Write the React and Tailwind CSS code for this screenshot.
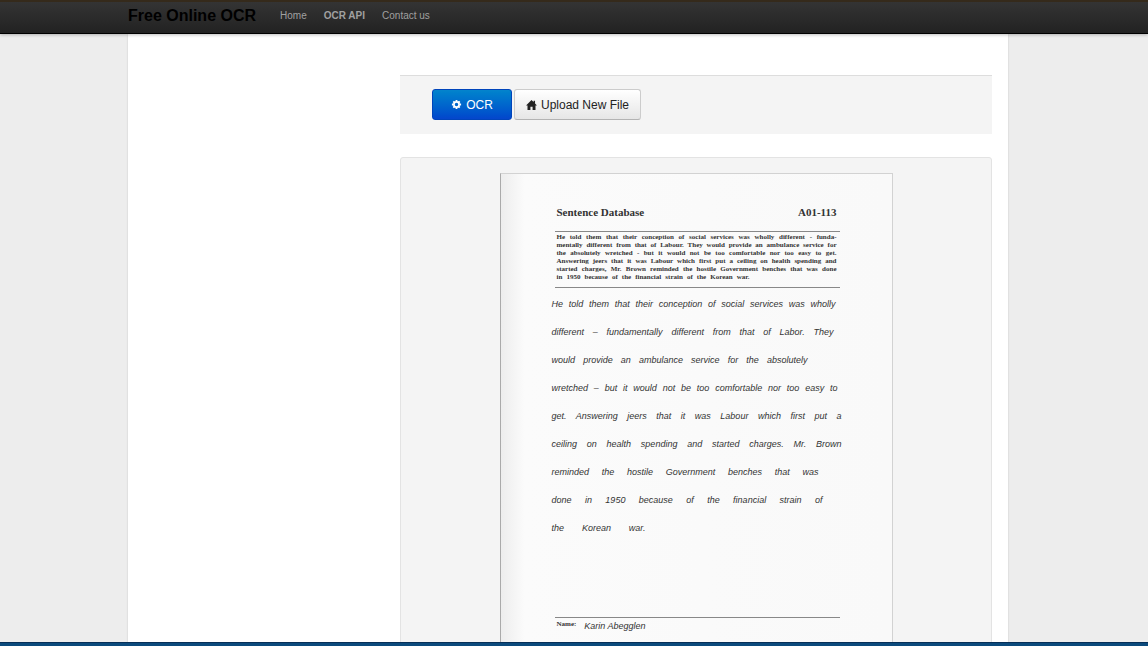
const printed = [
  "He told them that their conception of social services was wholly different - funda-",
  "mentally different from that of Labour. They would provide an ambulance service for",
  "the absolutely wretched - but it would not be too comfortable nor too easy to get.",
  "Answering jeers that it was Labour which first put a ceiling on health spending and",
  "started charges, Mr. Brown reminded the hostile Government benches that was done",
];

const written = [
  { text: "He told them that their conception of social services was wholly", width: "w-[284px]" },
  { text: "different – fundamentally different from that of Labor. They", width: "w-[282px]" },
  { text: "would provide an ambulance service for the absolutely", width: "w-[256px]" },
  { text: "wretched – but it would not be too comfortable nor too easy to", width: "w-[286px]" },
  { text: "get. Answering jeers that it was Labour which first put a", width: "w-[290px]" },
  { text: "ceiling on health spending and started charges. Mr. Brown", width: "w-[290px]" },
  { text: "reminded the hostile Government benches that was", width: "w-[267px]" },
  { text: "done in 1950 because of the financial strain of", width: "w-[271px]" },
  { text: "the Korean war.", width: "w-[94px]" },
];

function CogIcon() {
  return (
    <svg viewBox="0 0 12 12" className="size-[11px]" aria-hidden="true">
      <g stroke="currentColor" strokeWidth="2">
        <path d="M6 1v2M6 9v2M1 6h2M9 6h2M2.5 2.5l1.3 1.3M8.2 8.2l1.3 1.3M2.5 9.5l1.3-1.3M8.2 3.8l1.3-1.3" />
      </g>
      <circle cx="6" cy="6" r="2.8" fill="none" stroke="currentColor" strokeWidth="1.8" />
    </svg>
  );
}

function HomeIcon() {
  return (
    <svg viewBox="0 0 12 11" className="h-[10px] w-[11px]" fill="currentColor" aria-hidden="true">
      <path d="M6 0 0 6h1.6v5h3.2V7.4h2.4V11h3.2V6H12L9.9 3.9V.8H8.3v1.5z" />
    </svg>
  );
}

function Navbar() {
  return (
    <nav className="relative h-[34px] shrink-0 border-t-2 border-b border-t-[#352a1b] border-b-black bg-linear-to-b from-[#343434] to-[#222222] pr-3 shadow-[0_1px_3px_rgba(0,0,0,0.25)]">
      <div className="mx-auto flex h-full max-w-[880px] items-center text-[10px] leading-4 text-[#a0a0a0]">
        <a href="#" className="mr-6 pb-1 text-base leading-5 font-bold text-black">Free Online OCR</a>
        <div className="flex gap-[17px] pb-1">
          <a href="#">Home</a>
          <a href="#" className="font-bold">OCR API</a>
          <a href="#">Contact us</a>
        </div>
      </div>
    </nav>
  );
}

function ScannedPage() {
  return (
    <article className="mx-auto h-[560px] w-[393px] border border-[#d2d2d2] border-l-[#aaaaaa] bg-linear-to-r from-[#ededed] via-[#fbfbfb] via-6% to-[#f9f9f9] pt-8 pr-[52px] pl-[54px] font-['Liberation_Serif',serif] text-[#333333]">
      <header className="flex justify-between pr-[3px] pl-[2px] text-[11px] leading-3 font-bold">
        <h1>Sentence Database</h1>
        <span>A01-113</span>
      </header>
      <section className="mt-[13px] border-y border-[#888888] pt-px pr-[3px] pb-[6px] pl-[2px] text-[7px] leading-2 font-bold">
        {printed.map((line) => (
          <p key={line} className="whitespace-nowrap [text-align-last:justify]">{line}</p>
        ))}
        <p className="w-[193px] whitespace-nowrap [text-align-last:justify]">in 1950 because of the financial strain of the Korean war.</p>
      </section>
      <section className="mt-[2px] -mr-2 -ml-[3px] font-['Liberation_Sans',sans-serif] text-[9px] leading-7 text-[#333333] italic">
        {written.map((line) => (
          <p key={line.text} className={`whitespace-nowrap [text-align-last:justify] ${line.width}`}>{line.text}</p>
        ))}
      </section>
      <footer className="mt-[75px] flex border-t border-[#888888] pl-[2px] leading-3">
        <span className="mr-2 text-[7px] font-bold">Name:</span>
        <span className="pt-[2px] font-['Liberation_Sans',sans-serif] text-[9px] italic">Karin Abegglen</span>
      </footer>
    </article>
  );
}

export default function App() {
  return (
    <div className="flex h-screen flex-col overflow-hidden bg-[#ededed] font-['Liberation_Sans',Arial,sans-serif]">
      <Navbar />
      <div className="min-h-0 flex-1 overflow-hidden pr-3">
        <main className="mx-auto min-h-full max-w-[880px] bg-white pt-[41px] pr-4 pl-[272px] shadow-[0_0_2px_rgba(0,0,0,0.15)]">
          <div className="flex gap-[2px] border-t border-[#dddddd] bg-[#f4f4f4] px-8 pt-[13px] pb-[14px] text-xs leading-4">
            <button type="button" className="flex h-[31px] w-20 items-center justify-center gap-1 rounded-[3px] border border-[#0044bb] bg-linear-to-b from-[#0584cc] to-[#0545cc] text-white">
              <CogIcon />
              OCR
            </button>
            <button type="button" className="flex h-[31px] w-[127px] items-center justify-center gap-1 rounded-[3px] border border-[#cccccc] border-b-[#b3b3b3] bg-linear-to-b from-white to-[#e6e6e6] whitespace-nowrap text-[#222222]">
              <HomeIcon />
              Upload New File
            </button>
          </div>
          <div className="mt-[23px] rounded-[3px] border border-[#e3e3e3] bg-[#f4f4f4] py-[15px]">
            <ScannedPage />
          </div>
        </main>
      </div>
      <div className="h-1 shrink-0 border-t border-[#062f58] bg-[#0b4a7c]" />
    </div>
  );
}
